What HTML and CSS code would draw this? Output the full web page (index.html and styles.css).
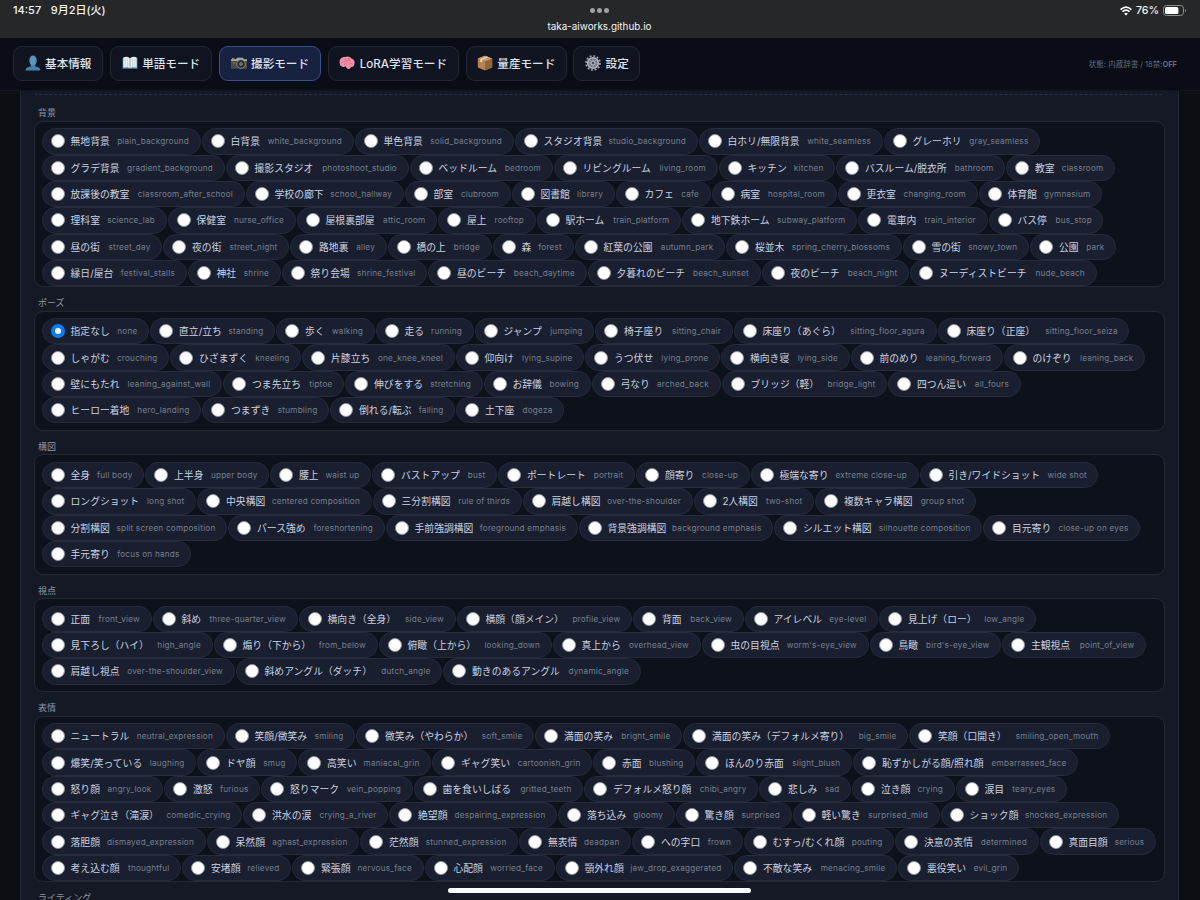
FILE: index.html
```html
<!DOCTYPE html>
<html lang="ja">
<head>
<meta charset="utf-8">
<title>撮影モード</title>
<link rel="stylesheet" href="styles.css">
</head>
<body>
<header class="status">
  <div class="status-left"><span>14:57</span><span>9月2日(火)</span></div>
  <div class="status-mid"><div class="dots"><i></i><i></i><i></i></div><div class="url">taka-aiworks.github.io</div></div>
  <div class="status-right">
    <svg width="12" height="10" viewBox="0 0 12 10" fill="none" stroke="#fff" stroke-width="1.6"><path d="M.6 3.6Q6-1.4 11.4 3.6M2.5 5.7Q6 2.5 9.5 5.7"/><path d="M6 9.4 4.1 7.4Q6 5.9 7.9 7.4Z" fill="#fff" stroke="none"/></svg>
    <span>76%</span>
    <svg width="24" height="11" viewBox="0 0 24 11"><rect x=".5" y=".5" width="20" height="10" rx="3" fill="none" stroke="#8b8d91"/><rect x="2" y="2" width="13.4" height="7" rx="1.6" fill="#fff"/><path d="M22 3.7q2 1.8 0 3.6z" fill="#8b8d91"/></svg>
  </div>
</header>
<nav class="tabs">
  <button class="tab t1"><svg class="ico" viewBox="0 0 16 16"><path d="M.6 15.500c0-2.700 2-3.300 5.400-4.300V9.600h4v1.600c3.400 1 5.400 1.600 5.400 4.300z" fill="#4680aa"/><ellipse cx="8" cy="5.600" rx="3.700" ry="5" fill="#5b94bd"/></svg>基本情報</button>
  <button class="tab t2"><svg class="ico" viewBox="0 0 16 16"><path d="M.5 3h15v10.800H.5z" fill="#397f9f"/><path d="M1.300 2.400Q5 1 8 3.200 11 1 14.700 2.400v10.400Q11 11.500 8 13.200 5 11.500 1.300 12.800z" fill="#e9edf0"/><path d="M8 3.200v10" stroke="#8f989f" stroke-width=".8"/><path d="M3.300 3v8.800M5.500 3v8.800M10.500 3v8.800M12.700 3v8.800" stroke="#c3cad0" stroke-width=".6"/></svg>単語モード</button>
  <button class="tab t3 active"><svg class="ico" viewBox="0 0 16 16"><path d="M0 4.200h5L6.300 2.700h5.400L13 4.200h3v9.600H0z" fill="#4c4b4a"/><path d="M0 4.200h5L6.300 2.700h5.400L13 4.200h3v1.900H0z" fill="#aaa69c"/><circle cx="10" cy="9" r="4.300" fill="#292b2f" stroke="#9d9b95" stroke-width=".8"/><circle cx="10" cy="9" r="2" fill="#66717b"/><path d="M1 3.200h2.500v1H1z" fill="#aaa"/><circle cx="3" cy="7.700" r=".7" fill="#c98a3e"/></svg>撮影モード</button>
  <button class="tab t4"><svg class="ico" viewBox="0 0 16 16"><path d="M1 9.200C-.6 5 2.400 2 5.800 2.100 8 .800 11.500 1.500 12.400 3.400 15 4 16.400 7 15.300 9.200c0 2-1.700 3-3.400 2.800-.500 1.800-2 2.500-3.500 1.700-.900-.900-1.400-1.400-1.700-2.400C4.600 12.600 1.600 11.800 1 9.200z" fill="#f08fa6"/><path d="M2.500 7.500q2-2.500 4-.500M5.500 4q2 .400 2 2.500 2-2 4-.500M9 3q.500 1.500 2.500 1.500M5 10q1-2 3.500-1M10 9.500q1.500-2 3.500-.500" fill="none" stroke="#cb6583" stroke-width=".7"/></svg>LoRA学習モード</button>
  <button class="tab t5"><svg class="ico" viewBox="0 0 16 16"><path d="M.8 3.400 8 .700l7.200 2.700v9L8 15.600.800 12.400z" fill="#b58252"/><path d="M8 6.200 15.200 3.400v9L8 15.600z" fill="#8f633b"/><path d="M.8 3.400 8 .700l7.200 2.700L8 6.200z" fill="#cc9a6a"/><path d="M9.800 1.400 11.400 2 5.200 4.900v2.700l-2-.900V4.200z" fill="#ead2b7"/></svg>量産モード</button>
  <button class="tab t6"><svg class="ico" viewBox="0 0 16 16"><circle cx="8" cy="8" r="7" fill="none" stroke="#a4a8b3" stroke-width="1.700" stroke-dasharray="1.900 1.765"/><circle cx="8" cy="8" r="5.300" fill="#70747f" stroke="#b4b7c0" stroke-width="1.600"/><path d="M8 3v10M3 8h10M4.500 4.500l7 7M11.500 4.500l-7 7" stroke="#a9adb7" stroke-width=".7"/><circle cx="8" cy="8" r="2" fill="#4d515b" stroke="#c0c2c9"/></svg>設定</button>
  <div class="state">状態: 内蔵辞書 / 18禁:<b>OFF</b></div>
</nav>
<main class="panel" id="panel"><div class="divider"></div></main>
<div class="home"></div>
<script src="app.js"></script>
</body>
</html>
```
FILE: styles.css
```css
*{box-sizing:border-box}
body{margin:0;width:1200px;height:900px;overflow:hidden;background:#0b0e13;color:#d3d9e7;font-family:Inter,"Noto Sans CJK JP",sans-serif;display:flex;flex-direction:column;position:relative}
.status{height:38px;flex:none;background:#262729;display:grid;grid-template-columns:1fr 1fr 1fr;color:#f4f4f5;font-size:11px;font-weight:500}
.status-left{padding:3px 0 0 13px;display:flex;gap:9.5px;line-height:15px}
.status-mid{text-align:center;padding-right:1px}
.dots{display:flex;justify-content:center;gap:2px;padding-top:8px}
.dots i{width:5px;height:5px;border-radius:50%;background:#a0a1a3}
.url{font-size:9.9px;line-height:14px;margin-top:5.5px;font-weight:400}
.status-right{display:flex;justify-content:flex-end;align-items:center;gap:4px;height:21px;padding-right:13px;font-size:10.6px}
.tabs{height:53px;flex:none;background:#0a0d16;border-bottom:1px solid #121622;display:flex;align-items:center;gap:6.9px;padding:0 13px 2px}
.tab{height:35px;border:1px solid #232734;border-radius:9px;background:#101420;color:#dfe3ee;font:500 11.6px Inter,"Noto Sans CJK JP",sans-serif;display:flex;align-items:center;justify-content:center;gap:4.5px;padding:0;white-space:nowrap}
.ico{width:16px;height:16px;flex:none}
.t1{width:90px}.t2{width:102px}.t3{width:102px}.t4{width:131px}.t5{width:101px}.t6{width:67px}
.active{background:#172140;border-color:#36508d}
.state{margin-left:auto;margin-right:10px;font-size:7.5px;color:#656b7a;white-space:nowrap}
.panel{flex:1;min-height:0;overflow:hidden;margin:0 21px 0 20px;border:solid #232733;border-width:0 1px;background:#151925;padding:0 13px}
.divider{height:4px;border-bottom:1px dashed #2c3240;border-radius:0 0 9px 9px}
.label{height:23.6px;padding:8px 0 0 4px;font-size:9px;line-height:16px;color:#9095a2}
.divider + .label{height:25.8px;padding-top:9.5px}
.box{border:1px solid #242936;border-radius:9px;background:#0d111b;padding:6.4px 6.8px 6.4px;max-height:166.2px;overflow:hidden}
.row{display:flex;gap:1.2px;height:26.37px}
.chip{flex:none;height:26.37px;border:1px solid #262c3a;border-radius:14px;background:#191f2e;padding:0 10.6px 0 8.2px;display:flex;align-items:center;white-space:nowrap;font-size:9.8px;color:#cbd2e1}
.radio{width:14px;height:14px;border-radius:50%;background:#fff;border:1px solid #8d919b;margin-right:5.6px;flex:none}
.radio.on{background:#fff;border:4px solid #087cf2}
.tag{margin-left:auto;font-size:8.2px;letter-spacing:.2px;color:#777f90}
.home{position:absolute;left:448px;top:888px;width:303px;height:5px;border-radius:3px;background:#fff}
```
FILE: app.js
```js
// Each row: chips as "name|tag", then the boundaries between chips in px.
const groups = [
["背景", [
["無地背景|plain_background;白背景|white_background;単色背景|solid_background;スタジオ背景|studio_background;白ホリ/無限背景|white_seamless;グレーホリ|gray_seamless", [218,371,531,715,900,1057.5]],
["グラデ背景|gradient_background;撮影スタジオ|photoshoot_studio;ベッドルーム|bedroom;リビングルーム|living_room;キッチン|kitchen;バスルーム/脱衣所|bathroom;教室|classroom", [242,426,570,735,852.5,1022.5,1132.5]],
["放課後の教室|classroom_after_school;学校の廊下|school_hallway;部室|clubroom;図書館|library;カフェ|cafe;病室|hospital_room;更衣室|changing_room;体育館|gymnasium", [262,421,528,632,728,854,995,1119.5]],
["理科室|science_lab;保健室|nurse_office;屋根裏部屋|attic_room;屋上|rooftop;駅ホーム|train_platform;地下鉄ホーム|subway_platform;電車内|train_interior;バス停|bus_stop", [184,313,454.5,553,698.5,874.5,1005,1121]],
["昼の街|street_day;夜の街|street_night;路地裏|alley;橋の上|bridge;森|forest;紅葉の公園|autumn_park;桜並木|spring_cherry_blossoms;雪の街|snowy_town;公園|park", [179.5,306.5,404,509,591,742.5,919,1046.5,1133.5]],
["縁日/屋台|festival_stalls;神社|shrine;祭り会場|shrine_festival;昼のビーチ|beach_daytime;夕暮れのビーチ|beach_sunset;夜のビーチ|beach_night;ヌーディストビーチ|nude_beach", [204,298,444.5,604,778,926.5,1114]]]],
["ポーズ", [
["指定なし|none|on;直立/立ち|standing;歩く|walking;走る|running;ジャンプ|jumping;椅子座り|sitting_chair;床座り（あぐら）|sitting_floor_agura;床座り（正座）|sitting_floor_seiza", [166.5,292.5,392,491,611.5,750,954,1147]],
["しゃがむ|crouching;ひざまずく|kneeling;片膝立ち|one_knee_kneel;仰向け|lying_supine;うつ伏せ|lying_prone;横向き寝|lying_side;前のめり|leaning_forward;のけぞり|leaning_back", [186.5,318.5,472,601.5,737.5,867,1020,1162.5]],
["壁にもたれ|leaning_against_wall;つま先立ち|tiptoe;伸びをする|stretching;お辞儀|bowing;弓なり|arched_back;ブリッジ（軽）|bridge_light;四つん這い|all_fours", [239.5,361.5,500,608,738,904.5,1038]],
["ヒーロー着地|hero_landing;つまずき|stumbling;倒れる/転ぶ|falling;土下座|dogeza", [218.5,346.5,472.5,581.5]]]],
["構図", [
["全身|full body;上半身|upper body;腰上|waist up;バストアップ|bust;ポートレート|portrait;顔寄り|close-up;極端な寄り|extreme close-up;引き/ワイドショット|wide shot", [161.5,286.5,388.5,514.5,652.5,767,936,1116]],
["ロングショット|long shot;中央構図|centered composition;三分割構図|rule of thirds;肩越し構図|over-the-shoulder;2人構図|two-shot;複数キャラ構図|group shot", [213.5,389,539,710,831.5,993.5]],
["分割構図|split screen composition;パース強め|foreshortening;手前強調構図|foreground emphasis;背景強調構図|background emphasis;シルエット構図|silhouette composition;目元寄り|close-up on eyes", [244.5,402,595,790.5,999.5,1157.5]],
["手元寄り|focus on hands", [208.5]]]],
["視点", [
["正面|front_view;斜め|three-quarter_view;横向き（全身）|side_view;横顔（顔メイン）|profile_view;背面|back_view;アイレベル|eye-level;見上げ（ロー）|low_angle", [169,315,473,649.5,761,895.5,1053.5]],
["見下ろし（ハイ）|high_angle;煽り（下から）|from_below;俯瞰（上から）|looking_down;真上から|overhead_view;虫の目視点|worm's-eye_view;鳥瞰|bird's-eye_view;主観視点|point_of_view", [230,395,569,718,886,1018.5,1163.5]],
["肩越し視点|over-the-shoulder_view;斜めアングル（ダッチ）|dutch_angle;動きのあるアングル|dynamic_angle", [252,459.5,658]]]],
["表情", [
["ニュートラル|neutral_expression;笑顔/微笑み|smiling;微笑み（やわらか）|soft_smile;満面の笑み|bright_smile;満面の笑み（デフォルメ寄り）|big_smile;笑顔（口開き）|smiling_open_mouth", [242,372.5,551.5,699.5,925.5,1127.5]],
["爆笑/笑っている|laughing;ドヤ顔|smug;高笑い|maniacal_grin;ギャグ笑い|cartoonish_grin;赤面|blushing;ほんのり赤面|slight_blush;恥ずかしがる顔/照れ顔|embarrassed_face", [213.5,314.5,448.5,609.5,712.5,869.5,1095.5]],
["怒り顔|angry_look;激怒|furious;怒りマーク|vein_popping;歯を食いしばる|gritted_teeth;デフォルメ怒り顔|chibi_angry;悲しみ|sad;泣き顔|crying;涙目|teary_eyes", [180.5,277.5,430,600.5,775.5,868.5,972,1084.5]],
["ギャグ泣き（滝涙）|comedic_crying;洪水の涙|crying_a_river;絶望顔|despairing_expression;落ち込み|gloomy;驚き顔|surprised;軽い驚き|surprised_mild;ショック顔|shocked_expression", [259.5,405.5,574.5,692,809,957,1136.5]],
["落胆顔|dismayed_expression;呆然顔|aghast_expression;茫然顔|stunned_expression;無表情|deadpan;への字口|frown;むすっ/むくれ顔|pouting;決意の表情|determined;真面目顔|serious", [223,376.5,535.5,648.5,760,911.5,1056,1173.5]],
["考え込む顔|thoughtful;安堵顔|relieved;緊張顔|nervous_face;心配顔|worried_face;顎外れ顔|jaw_drop_exaggerated;不敵な笑み|menacing_smile;悪役笑い|evil_grin", [198.5,308.5,441,572,750.5,914.5,1036.5]]]],
["ライティング", []]
];
const GAP = 1.2, START = 58;
const chip = (s, width) => {
  const [name, tag, on] = s.split("|");
  return `<label class="chip" style="width:${width.toFixed(1)}px"><span class="radio ${on || ""}"></span>${name}<span class="tag">${tag}</span></label>`;
};
const row = ([chips, stops]) =>
  `<div class="row">${chips.split(";").map((s, i) => chip(s, stops[i] - (i ? stops[i - 1] : START) - GAP)).join("")}</div>`;
document.getElementById("panel").insertAdjacentHTML("beforeend", groups.map(([title, rows]) =>
  `<div class="label">${title}</div>` + (rows.length ? `<section class="box">${rows.map(row).join("")}</section>` : "")
).join(""));
```
